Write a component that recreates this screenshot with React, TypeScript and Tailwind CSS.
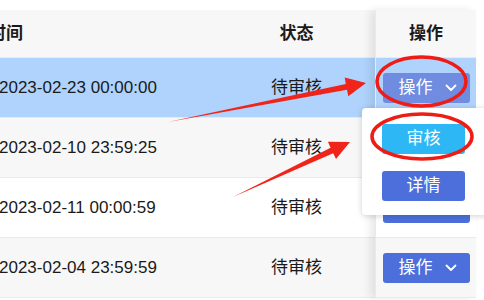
import React from "react";

const rows = [
  { time: "2023-02-23 00:00:00", bg: "bg-[#afd3fc]", hl: true },
  { time: "2023-02-10 23:59:25", bg: "bg-[#f7f7f7]", hl: false },
  { time: "2023-02-11 00:00:59", bg: "bg-white", hl: false },
  { time: "2023-02-04 23:59:59", bg: "bg-[#f7f7f7]", hl: false },
];

function Chevron() {
  return (
    <svg width="12" height="8" viewBox="0 0 12 8" className="ml-[12px]">
      <path d="M1.5 1.5 L6 6 L10.5 1.5" fill="none" stroke="white" strokeWidth="1.8" strokeLinecap="round" strokeLinejoin="round" />
    </svg>
  );
}

function OpButton({ light }: { light?: boolean }) {
  return (
    <div
      className={`flex h-[30px] w-[87px] items-center justify-center rounded-[3px] text-[17px] leading-none text-white ${
        light ? "bg-[#6f8ce0]" : "bg-[#4c6fdb]"
      }`}
    >
      <span className="ml-[3px]">操作</span>
      <Chevron />
    </div>
  );
}

export default function App() {
  return (
    <div
      className="relative h-[300px] w-[484px] overflow-hidden bg-white text-[#1a1a1a]"
      style={{ fontFamily: '"Liberation Sans", "Noto Sans CJK SC", sans-serif' }}
    >
      <div className="flex pt-[10px]">
        {/* main columns */}
        <div className="flex w-[375px] flex-col">
          <div className="flex h-[48px] items-center border-b border-[#e8eaec] bg-[#f7f7f7] text-[17px] font-bold">
            <div className="w-[218px] pl-0">
              <span className="ml-[-11px]">时间</span>
            </div>
            <div className="w-[157px] text-center">状态</div>
          </div>
          {rows.map((r, i) => (
            <div key={i} className={`flex h-[60px] items-center border-b border-[#e8eaec] text-[17px] ${r.bg}`}>
              <div className="w-[218px] whitespace-nowrap">
                <span className="ml-[-1px]">{r.time}</span>
              </div>
              <div className="w-[157px] text-center">待审核</div>
            </div>
          ))}
        </div>
        {/* fixed operations column */}
        <div className="relative z-10 flex w-[101px] flex-col border-l border-[#e8eaec] shadow-[-5px_0_8px_rgba(0,0,0,0.09)]">
          <div className="flex h-[48px] items-center justify-center border-b border-[#e8eaec] bg-[#f7f7f7] text-[17px] font-bold">
            操作
          </div>
          {rows.map((r, i) => (
            <div key={i} className={`flex h-[60px] items-center justify-center border-b border-[#e8eaec] ${r.bg}`}>
              <OpButton light={r.hl} />
            </div>
          ))}
        </div>
      </div>

      {/* dropdown popup */}
      <div className="absolute left-[362px] top-[108px] z-20 flex h-[107px] w-[140px] flex-col gap-[17px] rounded-[4px] bg-white pl-[20px] pt-[16px] shadow-[0_1px_6px_rgba(0,0,0,0.18)]">
        <div className="flex h-[30px] w-[83px] items-center justify-center rounded-[3px] bg-[#2db7f5] text-[17px] text-white">
          审核
        </div>
        <div className="flex h-[30px] w-[83px] items-center justify-center rounded-[3px] bg-[#4c6fdb] text-[17px] text-white">
          详情
        </div>
      </div>

      {/* annotations */}
      <svg className="pointer-events-none absolute left-0 top-0 z-30" width="484" height="300" viewBox="0 0 484 300">
        <polygon
          points="168,122 345.8,84.0 344.7,77.6 366,83 348.3,96.2 347.0,89.8"
          fill="#f0241b"
        />
        <polygon
          points="233,197 330.6,147.8 327.9,141.8 350,142 336,159.1 333.2,153.2"
          fill="#f0241b"
        />
        <ellipse cx="421.5" cy="81.5" rx="44.5" ry="24.5" fill="none" stroke="#ee1c14" strokeWidth="3.5" />
        <ellipse cx="422" cy="136.5" rx="50" ry="22.5" fill="none" stroke="#ee1c14" strokeWidth="3.5" />
      </svg>
    </div>
  );
}
